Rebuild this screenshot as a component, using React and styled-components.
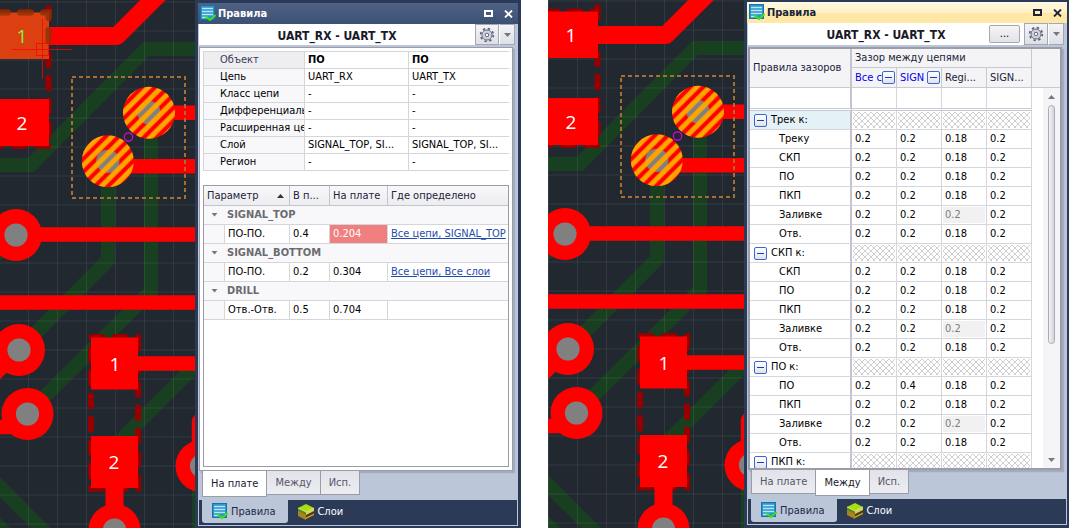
import React from 'react';
import styled, { createGlobalStyle, css } from 'styled-components';

const GlobalStyle = createGlobalStyle`
  * {
    box-sizing: border-box;
  }

  body {
    margin: 0;
    background: #fff;
    color: #000;
    font-family: "DejaVu Sans Condensed", "DejaVu Sans", sans-serif;
    font-size: 11px;
    line-height: 16px;
  }

  button {
    margin: 0;
    padding: 0;
    border: 0;
    background: none;
    color: inherit;
    font: inherit;
    cursor: pointer;
  }
`;

// Page
const Page = styled.main`
  display: flex;
  gap: 27px;
  height: 100vh;
  min-height: 400px;
`;

const Workspace = styled.section`
  flex: 1;
  min-width: 0;
  display: grid;
  grid-template-columns: ${(p) => p.$columns};
  grid-template-rows: minmax(0, 1fr);
`;

const BoardSvg = styled.svg`
  display: block;
  width: 100%;
  height: 100%;
  background: #222830;
`;

const Dock = styled.aside`
  min-width: 0;
  display: flex;
  flex-direction: column;
  padding: ${(p) => (p.$active ? '2px 2px 3px 3px' : '3px 3px 2px 3px')};
  background: #2b3a57;
`;

const TitleBar = styled.header`
  display: flex;
  align-items: center;
  gap: 2px;
  height: 21px;
  padding: 0 1px 0 2px;
  color: ${(p) => (p.$active ? '#1c2438' : '#fff')};
  background: ${(p) =>
    p.$active
      ? 'linear-gradient(#fff8e4, #fff0c4 50%, #ffe8a6 51%, #ffe8a6)'
      : 'linear-gradient(#4f6285, #3c5074)'};
`;

const Title = styled.h2`
  flex: 1;
  margin: 0;
  font-size: 11px;
  font-weight: bold;
`;

const WindowButton = styled.button`
  display: flex;
  align-items: center;
  justify-content: center;
  width: 18px;
  height: 18px;
`;

const DockBody = styled.div`
  flex: 1;
  min-height: 0;
  display: flex;
  flex-direction: column;
  padding: 0 1px 1px;
  background: #bbc6d8;
`;

const PairBar = styled.div`
  display: flex;
  height: ${(p) => (p.$active ? '22px' : '21px')};
  padding-right: 2px;
`;

const PairName = styled.div`
  flex: 1;
  display: grid;
  grid-template-columns: 35px 1fr 35px;
  align-items: center;
  background: #fff;
`;

const PairTitle = styled.strong`
  grid-column: 2;
  padding-top: 2px;
  text-align: center;
  font-size: 12px;
  color: #1a1a2a;
`;

const ToolButton = styled.button`
  display: flex;
  align-items: center;
  justify-content: center;
  width: ${(p) => p.$width};
  border: 1px solid #a5a7b2;
  border-left-color: ${(p) => (p.$joined ? '#fff' : '#a5a7b2')};
  background: linear-gradient(#f4f4f7, #dfe0e6);
`;

const MoreButton = styled.button`
  width: 31px;
  height: 18px;
  border: 1px solid #a5a7b2;
  border-radius: 2px;
  background: linear-gradient(#f4f4f6, #e2e3e8);
  line-height: 14px;
`;

const Frame = styled.div`
  flex: 1;
  min-height: 0;
  display: flex;
  flex-direction: ${(p) => (p.$tight ? 'row' : 'column')};
  gap: ${(p) => (p.$tight ? '0' : '14px')};
  margin: 2px 4px 0 0;
  padding: ${(p) => (p.$tight ? '0' : '3px')};
  border: ${(p) => (p.$tight ? '2px' : '1px')} solid #9b9ba9;
  box-shadow: 2px 2px 1px #a4adc0;
  background: #fff;
  overflow: hidden;
`;

// Tables
const Table = styled.table`
  width: 100%;
  table-layout: fixed;
  border-collapse: separate;
  border-spacing: 0;

  th,
  td {
    padding: 0 3px;
    overflow: hidden;
    white-space: nowrap;
    text-align: left;
    font-weight: normal;
    border-right: 1px solid #d5d5dc;
    border-bottom: 1px solid #d5d5dc;
  }
`;

const ObjectTable = styled(Table)`
  border-top: 1px solid #d5d5dc;
  border-left: 1px solid #d5d5dc;

  th,
  td {
    height: 17px;
  }

  th {
    padding: 0 0 0 16px;
    background: #f8f8fb;
  }

  td:last-child {
    border-right: 0;
  }

  tr:first-child th {
    color: #3a3a5c;
    background: #eeeef1;
  }

  tr:first-child td {
    font-weight: bold;
  }
`;

const ResultBox = styled.div`
  flex: 1;
  min-height: 0;
  border: 1px solid #9b9ba9;
`;

const ResultTable = styled(Table)`
  thead th {
    height: 20px;
    color: #22223a;
    background: linear-gradient(#f8f8fa, #ededf0);
    border-color: #c4c4ce;
  }

  td,
  tbody th {
    height: 19px;
  }

  th:last-child,
  td:last-child {
    border-right: 0;
  }
`;

const SortLabel = styled.button`
  display: flex;
  align-items: center;
  justify-content: space-between;
  width: 100%;
  padding-right: 2px;
`;

const GroupCell = styled.th`
  background: #f8f8fb;
`;

const GroupButton = styled.button`
  display: flex;
  align-items: center;
  gap: 9px;
  padding-left: 4px;
  color: #6b6b70;
  font-weight: bold;
`;

const IndentCell = styled.td`
  background: #f8f8fb;
`;

const ValueCell = styled.td`
  ${(p) =>
    p.$failed &&
    css`
      color: #fff;
      background: #f08080;
    `}
`;

const RuleLink = styled.a`
  color: #1f4cab;
  text-decoration: underline;
`;

const GapTable = styled(Table)`
  flex: none;
  width: 282px;

  th,
  td {
    height: 19px;
    padding: 0 3px;
  }

  thead th {
    color: #22223a;
    background: #f4f4f6;
    border-color: #c9c9d1;
  }

  thead tr:nth-child(2) th {
    height: 20px;
    padding-right: 1px;
  }

  thead td {
    height: 23px;
    border-bottom: 3px double #c9c9d1;
  }

  tr > .rule {
    border-right: 2px solid #c4c3cf;
  }
`;

const GroupRule = styled.th`
  &&& {
    padding: 0 4px;
    background: ${(p) => (p.$selected ? '#e4f1f7' : '#fff')};
  }
`;

const RuleName = styled.th`
  &&& {
    padding-left: 29px;
  }
`;

const ColumnLabel = styled.div`
  display: flex;
  align-items: center;
  justify-content: space-between;
  color: #0000f0;
`;

const GroupLabel = styled.div`
  display: flex;
  align-items: center;
  gap: 4px;
`;

const ColumnName = styled.span`
  flex: 1;
  min-width: 0;
  overflow: hidden;
`;

const Collapse = styled.button`
  flex: none;
  position: relative;
  width: 13px;
  height: 13px;
  border: 1px solid #3f66cf;
  border-radius: 2px;
  background: linear-gradient(#fff, #dfe3ea);

  &::after {
    content: '';
    position: absolute;
    left: 2px;
    top: 5px;
    width: 7px;
    height: 1px;
    background: #1d3fae;
  }
`;

const HatchCell = styled.td`
  &&& {
    padding: 1px;
    background-image:
      linear-gradient(45deg, transparent 43%, #cfcfcf 43% 57%, transparent 57%),
      linear-gradient(-45deg, transparent 43%, #cfcfcf 43% 57%, transparent 57%);
    background-size: 6px 6px;
    background-origin: content-box;
    background-clip: content-box;
  }
`;

const GapValue = styled.td`
  ${(p) =>
    p.$locked &&
    css`
      color: #7d7d7d;
      background: #f1f1f1;
      box-shadow: inset 0 0 0 1px #fff;
    `}
`;

const GapSide = styled.div`
  flex: 1;
  display: flex;
  flex-direction: column;
`;

const GapSideHead = styled.div`
  height: 39px;
  border-bottom: 1px solid #c9c9d1;
  background: #f4f4f6;
`;

const ScrollBar = styled.div`
  flex: 1;
  align-self: flex-end;
  display: flex;
  flex-direction: column;
  align-items: center;
  width: 17px;
  background: #f5f5f7;
`;

const ScrollArrow = styled.button`
  width: 17px;
  height: 17px;
  line-height: 0;
`;

const ScrollTrack = styled.div`
  flex: 1;
`;

const ScrollThumb = styled.div`
  width: 7px;
  height: 69%;
  border: 1px solid #aaaab4;
  border-radius: 4px;
  background: linear-gradient(90deg, #f4f4f6, #d2d2da);
`;

// Tabs
const Tabs = styled.nav`
  display: flex;
  align-items: flex-start;
  height: 29px;
  padding-left: 3px;
`;

const Tab = styled.button`
  height: ${(p) => (p.$active ? '26px' : '24px')};
  padding: 0 8px;
  margin-left: -1px;
  border: 1px solid #9b9ba9;
  border-top: 0;
  color: ${(p) => (p.$active ? '#1a1a2e' : '#55556a')};
  background: ${(p) => (p.$active ? '#fff' : 'linear-gradient(#e2e3e9, #ecedf0)')};

  &:first-child {
    margin-left: 0;
  }
`;

const DockTabs = styled.nav`
  display: flex;
  height: 25px;
  padding: 0 3px 2px;
  background: #2b3a57;
`;

const DockTab = styled.button`
  display: flex;
  align-items: center;
  gap: 3px;
  padding: 0 13px 0 10px;
  border-radius: 0 0 3px 3px;
  color: ${(p) => (p.$active ? '#1c2a4a' : '#fff')};
  background: ${(p) => (p.$active ? '#bbc6d8' : 'transparent')};
`;

// Icons
const RulesIcon = () => (
  <svg width="16" height="17" viewBox="0 0 16 17" aria-hidden="true">
    <rect x="0.5" y="0.5" width="14" height="14" fill="#2b95cc" stroke="#1674a8" />
    <path d="M2 3.5h11M2 6.5h11M2 9.5h11M2 12.5h6" stroke="#b4e6fa" strokeWidth="1.4" />
    <path d="M5 11l5 4 5.5-5" fill="none" stroke="#39e01c" strokeWidth="2" />
  </svg>
);

const LayersIcon = () => (
  <svg width="16" height="16" viewBox="0 0 16 16" aria-hidden="true">
    <path d="M0 4l8 4v8l-8-4z" fill="#a8861c" />
    <path d="M16 4l-8 4v8l8-4z" fill="#4d3d14" />
    <path d="M0 4l8 4v3l-8-4z" fill="#5f8a10" />
    <path d="M16 4l-8 4v3l8-4z" fill="#d8d05a" />
    <path d="M8 13.5l8-4v1.5l-8 4z" fill="#c9a53a" />
    <path d="M8 0l8 4-8 4-8-4z" fill="#a5e012" />
    <path d="M0 4l8 4 8-4" fill="none" stroke="#e4f49a" strokeWidth="0.8" />
  </svg>
);

const GearIcon = () => (
  <svg width="16" height="16" viewBox="0 0 16 16" aria-hidden="true">
    <circle cx="8" cy="8" r="6.4" fill="none" stroke="#5a6178" strokeWidth="1.6" strokeDasharray="2.4 2.627" />
    <circle cx="8" cy="8" r="5" fill="#e9ebf1" stroke="#5a6178" strokeWidth="1" />
    <circle cx="8" cy="8" r="3.4" fill="none" stroke="#bcc2d0" />
    <circle cx="8" cy="8" r="1.8" fill="#fff" stroke="#5a6178" />
  </svg>
);

const Arrow = ({ up, small, color = '#77777f' }) => (
  <svg width="7" height="4" viewBox="0 0 7 4" aria-hidden="true">
    <path
      d={up ? 'M0 4h7L3.5 0z' : small ? 'M0.5 0h6L3.5 3.5z' : 'M0 0h7L3.5 4z'}
      fill={color}
    />
  </svg>
);

// PCB fragment
const pads = [
  { cx: 16, cy: 235 },
  { cx: 19, cy: 350 },
  { cx: 27.5, cy: 414 },
  { cx: 114.5, cy: 530 },
  { cx: 201.5, cy: 466 },
];

const selectedPads = [
  { cx: 149, cy: 112.7 },
  { cx: 107.8, cy: 161.3 },
];

const gridLines = Array.from({ length: 20 }, (_, i) => i * 29);

const Board = ({ id, viewBox, highlighted }) => (
  <BoardSvg viewBox={viewBox} preserveAspectRatio="xMinYMin slice" role="img" aria-label="PCB">
    <defs>
      <pattern
        id={id}
        width="9.2"
        height="9.2"
        patternUnits="userSpaceOnUse"
        patternTransform="translate(149 112.7) rotate(45)"
      >
        <rect x="0" y="0" width="2.5" height="9.2" fill="#ffa500" />
        <rect x="6.7" y="0" width="2.5" height="9.2" fill="#ffa500" />
      </pattern>
    </defs>

    <g fill="none" stroke="#184020" strokeWidth="14">
      <path d="M-6 165H31L146 49H202" />
      <path d="M108 161V260L19 350" />
      <path d="M151 113V291L27 414" />
      <path d="M202 359L110 451" />
      <path d="M16 235L-12 263" />
      <path d="M-8 479L48 535" />
      <path d="M199 466V535" />
    </g>
    <path d="M-2 516L11 529H-2z" fill="#184020" />

    <g stroke="#fff" strokeOpacity="0.08">
      {gridLines.map((n) => (
        <path key={n} d={`M${n - 0.5} -2V532M-2 ${n + 2}H200`} />
      ))}
    </g>

    <g fill="none" stroke="#960000" strokeWidth="6" strokeLinecap="round" strokeDasharray="11 12.2">
      <path d="M48.5 8V146" />
      <path d="M-3 12.5H49" />
      <path d="M14 146H49M-9 146H1" />
      <path d="M91 337V489" strokeDashoffset="11" />
      <path d="M138 337.7V489" />
      <path d="M91.5 337H138.5" />
      <path d="M91.5 488.5H138.5" />
    </g>

    <g fill="none" stroke="#f00" strokeWidth="14.4" strokeLinecap="round" strokeLinejoin="round">
      <path d="M45 36H117L160 -7" strokeWidth="18" />
      <path d="M149 112.8H210" />
      <path d="M108 166.3H210" />
      <path d="M16 234.5H210" />
      <path d="M-10 302.5H210" />
      <path d="M130 363.5H210" />
      <path d="M114.5 480V530" strokeWidth="18" />
      <path d="M19 350L-10 379" />
      <path d="M-10 427H15L27 415" />
      <path d="M199 466V421L212 408" />
    </g>

    {pads.map((p) => (
      <g key={`${p.cx}-${p.cy}`}>
        <circle {...p} r="26" fill="#f00" />
        <circle {...p} r="11.6" fill="#808080" />
      </g>
    ))}

    <g fill="#f00">
      <rect x="-5" y="12.5" width="54" height="46.5" fill={highlighted ? '#dc4010' : '#f00'} />
      <rect x="-5" y="99" width="54" height="47" />
      <rect x="91" y="337.5" width="47" height="52" />
      <rect x="91" y="436" width="47" height="52" />
    </g>
    {highlighted && (
      <g fill="none">
        <path
          d="M48.5 30V41M-3 12.5H8M20 12.5H31M43 12.5H48.5V18"
          stroke="#8a3208"
          strokeWidth="6"
          strokeLinecap="round"
          strokeOpacity="0.8"
        />
        <path d="M12 49.5H72M42.5 19V79M36.5 43.5H48.5V55.5H36.5z" stroke="#f00" strokeOpacity="0.75" />
      </g>
    )}

    <g fill="#fff" fontFamily='"Open Sans", sans-serif' fontSize="19" textAnchor="middle">
      <text x="22" y="43" fill={highlighted ? '#88f040' : '#fff'}>1</text>
      <text x="22" y="130">2</text>
      <text x="115" y="371">1</text>
      <text x="114" y="469">2</text>
    </g>

    {selectedPads.map((p) => (
      <g key={p.cx}>
        <circle {...p} r="26" fill="#f00" />
        <circle {...p} r="11.6" fill="#808080" />
        <circle {...p} r="26" fill={`url(#${id})`} />
      </g>
    ))}

    <circle cx="128.5" cy="137" r="4.2" fill="none" stroke="#e000e0" strokeWidth="1.2" />
    <rect
      x="72"
      y="77"
      width="113"
      height="121"
      fill="none"
      stroke="#a66d35"
      strokeWidth="2"
      strokeDasharray="4 3"
    />
  </BoardSvg>
);

// Data
const objectRows = [
  ['Объект', 'ПО', 'ПО'],
  ['Цепь', 'UART_RX', 'UART_TX'],
  ['Класс цепи', '-', '-'],
  ['Дифференциаль', '-', '-'],
  ['Расширенная це', '-', '-'],
  ['Слой', 'SIGNAL_TOP, SI...', 'SIGNAL_TOP, SI...'],
  ['Регион', '-', '-'],
];

const resultGroups = [
  { name: 'SIGNAL_TOP', row: ['ПО-ПО.', '0.4', '0.204', 'Все цепи, SIGNAL_TOP'], failed: true },
  { name: 'SIGNAL_BOTTOM', row: ['ПО-ПО.', '0.2', '0.304', 'Все цепи, Все слои'] },
  { name: 'DRILL', row: ['Отв.-Отв.', '0.5', '0.704', ''] },
];

const gapGroups = [
  { name: 'Трек к:', rules: ['Треку', 'СКП', 'ПО', 'ПКП', 'Заливке', 'Отв.'], selected: true },
  { name: 'СКП к:', rules: ['СКП', 'ПО', 'ПКП', 'Заливке', 'Отв.'] },
  { name: 'ПО к:', rules: ['ПО', 'ПКП', 'Заливке', 'Отв.'] },
  { name: 'ПКП к:', rules: [] },
];

const gapValues = (group, rule) => [
  '0.2',
  group === 'ПО к:' && rule === 'ПО' ? '0.4' : '0.2',
  rule === 'Заливке' ? '0.2' : '0.18',
  '0.2',
];

const tabNames = ['На плате', 'Между', 'Исп.'];

// Panels
const RulesDock = ({ active, tab, children }) => (
  <Dock $active={active}>
    <TitleBar $active={active}>
      <RulesIcon />
      <Title>Правила</Title>
      <WindowButton aria-label="Развернуть">
        <svg width="9" height="7" viewBox="0 0 9 7">
          <path d="M1 1h7v5H1z" fill="none" stroke="currentColor" strokeWidth="2" />
        </svg>
      </WindowButton>
      <WindowButton aria-label="Закрыть">
        <svg width="9" height="8" viewBox="0 0 9 8">
          <path d="M1 0.5l7 7M8 0.5l-7 7" stroke="currentColor" strokeWidth="1.8" />
        </svg>
      </WindowButton>
    </TitleBar>
    <DockBody>
      <PairBar $active={active}>
        <PairName>
          <PairTitle>UART_RX - UART_TX</PairTitle>
          {active && <MoreButton>...</MoreButton>}
        </PairName>
        <ToolButton $width="24px" aria-label="Настройки">
          <GearIcon />
        </ToolButton>
        <ToolButton $width="16px" $joined aria-label="Меню настроек">
          <Arrow />
        </ToolButton>
      </PairBar>
      {children}
      <Tabs>
        {tabNames.map((name) => (
          <Tab key={name} $active={name === tab}>
            {name}
          </Tab>
        ))}
      </Tabs>
      <DockTabs>
        <DockTab $active>
          <RulesIcon />
          Правила
        </DockTab>
        <DockTab>
          <LayersIcon />
          Слои
        </DockTab>
      </DockTabs>
    </DockBody>
  </Dock>
);

const OnBoardPage = () => (
  <Frame>
    <ObjectTable>
      <colgroup>
        <col width="101" />
        <col width="104" />
        <col />
      </colgroup>
      <tbody>
        {objectRows.map(([name, first, second]) => (
          <tr key={name}>
            <th scope="row">{name}</th>
            <td>{first}</td>
            <td>{second}</td>
          </tr>
        ))}
      </tbody>
    </ObjectTable>
    <ResultBox>
      <ResultTable>
        <colgroup>
          <col width="21" />
          <col width="65" />
          <col width="40" />
          <col width="58" />
          <col />
        </colgroup>
        <thead>
          <tr>
            <th colSpan="2">
              <SortLabel>
                Параметр <Arrow up color="#33333f" />
              </SortLabel>
            </th>
            <th>В п...</th>
            <th>На плате</th>
            <th>Где определено</th>
          </tr>
        </thead>
        <tbody>
          {resultGroups.map(({ name, row, failed }) => (
            <React.Fragment key={name}>
              <tr>
                <GroupCell colSpan="5">
                  <GroupButton>
                    <Arrow small />
                    {name}
                  </GroupButton>
                </GroupCell>
              </tr>
              <tr>
                <IndentCell />
                <td>{row[0]}</td>
                <td>{row[1]}</td>
                <ValueCell $failed={failed}>{row[2]}</ValueCell>
                <td>{row[3] && <RuleLink href="#rule">{row[3]}</RuleLink>}</td>
              </tr>
            </React.Fragment>
          ))}
        </tbody>
      </ResultTable>
    </ResultBox>
  </Frame>
);

const BetweenPage = () => (
  <Frame $tight>
    <GapTable>
      <colgroup>
        <col width="102" />
        <col width="45" />
        <col width="45" />
        <col width="45" />
        <col width="45" />
      </colgroup>
      <thead>
        <tr>
          <th className="rule" rowSpan="2">Правила зазоров</th>
          <th colSpan="4">Зазор между цепями</th>
        </tr>
        <tr>
          {['Все с', 'SIGN'].map((name) => (
            <th key={name}>
              <ColumnLabel>
                <ColumnName>{name}</ColumnName>
                <Collapse aria-label="Свернуть" />
              </ColumnLabel>
            </th>
          ))}
          <th>Regi...</th>
          <th>SIGN...</th>
        </tr>
        <tr>
          <td className="rule" />
          <td />
          <td />
          <td />
          <td />
        </tr>
      </thead>
      <tbody>
        {gapGroups.map(({ name, rules, selected }) => (
          <React.Fragment key={name}>
            <tr>
              <GroupRule className="rule" scope="row" $selected={selected}>
                <GroupLabel>
                  <Collapse aria-label="Свернуть" />
                  {name}
                </GroupLabel>
              </GroupRule>
              <HatchCell />
              <HatchCell />
              <HatchCell />
              <HatchCell />
            </tr>
            {rules.map((rule) => (
              <tr key={rule}>
                <RuleName className="rule" scope="row">{rule}</RuleName>
                {gapValues(name, rule).map((value, i) => (
                  <GapValue key={i} $locked={i === 2 && rule === 'Заливке'}>
                    {value}
                  </GapValue>
                ))}
              </tr>
            ))}
          </React.Fragment>
        ))}
      </tbody>
    </GapTable>
    <GapSide>
      <GapSideHead />
      <ScrollBar>
        <ScrollArrow aria-label="Вверх">
          <Arrow up />
        </ScrollArrow>
        <ScrollTrack>
          <ScrollThumb />
        </ScrollTrack>
        <ScrollArrow aria-label="Вниз">
          <Arrow />
        </ScrollArrow>
      </ScrollBar>
    </GapSide>
  </Frame>
);

const App = () => {
  return (
    <>
      <GlobalStyle />
      <Page>
        <Workspace $columns="195fr 326fr">
          <Board id="stripes-left" viewBox="0 0 195 528" highlighted />
          <RulesDock tab="На плате">
            <OnBoardPage />
          </RulesDock>
        </Workspace>
        <Workspace $columns="196fr 325fr">
          <Board id="stripes-right" viewBox="-1 1 196 528" />
          <RulesDock active tab="Между">
            <BetweenPage />
          </RulesDock>
        </Workspace>
      </Page>
    </>
  );
};

export default App;
